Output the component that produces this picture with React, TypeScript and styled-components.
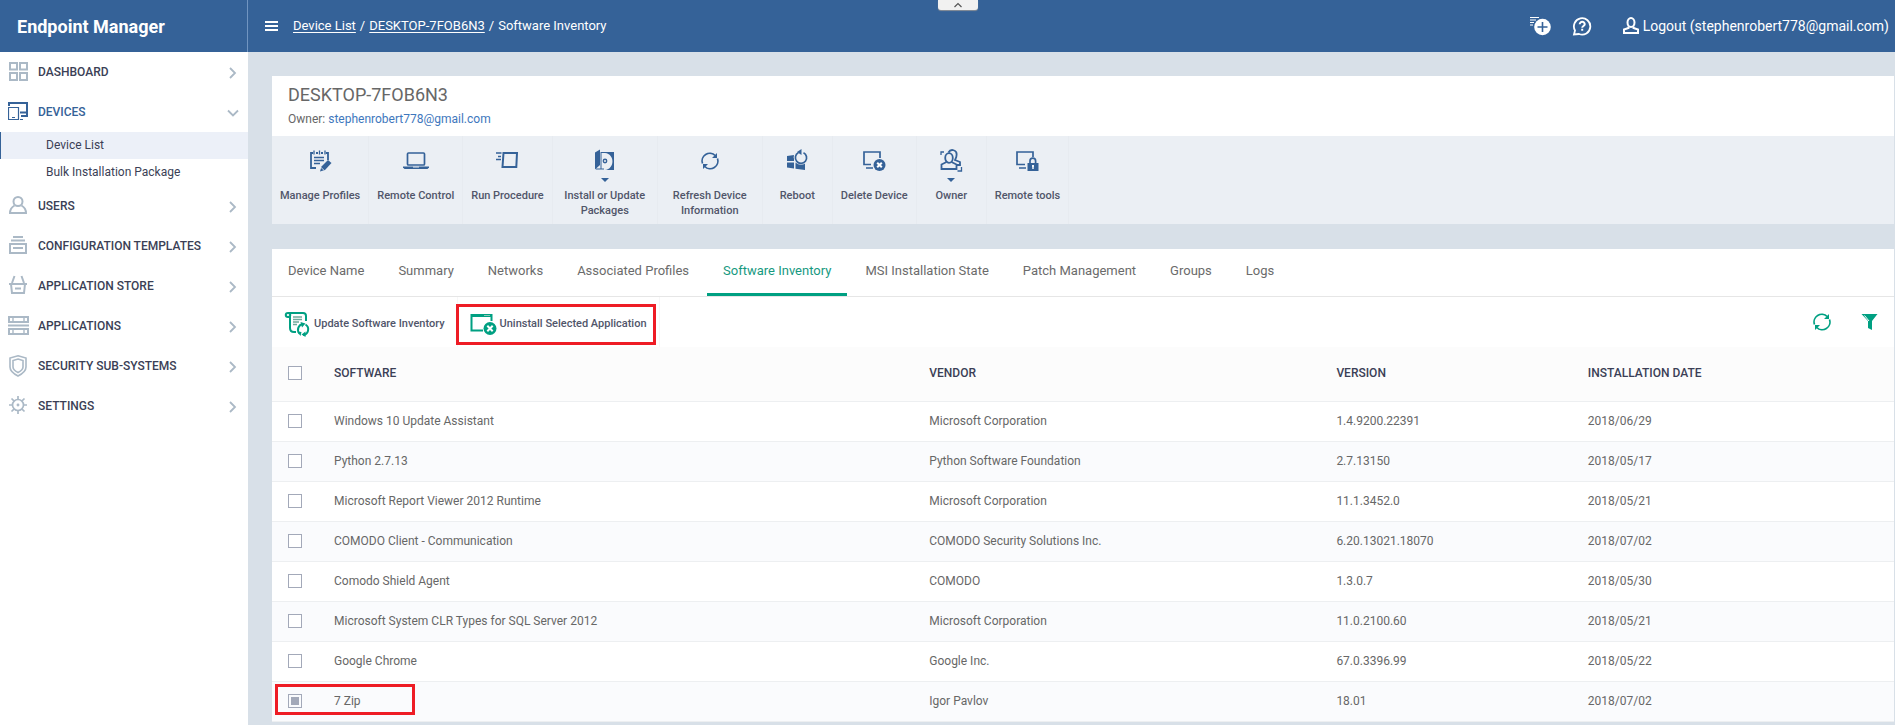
import React from 'react';
import styled, { createGlobalStyle, css } from 'styled-components';

const blue = '#356298';
const green = '#00a082';
const muted = '#abb9c6';

const GlobalStyle = createGlobalStyle`
  *, *::before, *::after { box-sizing: border-box; }
  body {
    margin: 0;
    background: #d8e0e8;
    color: #676767;
    font-family: Roboto, 'Liberation Sans', sans-serif;
    font-size: 12px;
    line-height: 16px;
  }
  button { font: inherit; color: inherit; background: none; border: 0; padding: 0; cursor: pointer; }
  h1, h2, ul, nav, p { margin: 0; padding: 0; }
  ul { list-style: none; }
  a { color: inherit; text-decoration: none; }
  svg { display: block; flex: none; }
`;

const Page = styled.div`
  display: flex;
  flex-direction: column;
  min-height: 100vh;
`;

/* Header */
const Header = styled.header`
  position: relative;
  display: flex;
  height: 52px;
  background: ${blue};
  color: #fff;
`;
const Brand = styled.div`
  display: flex;
  align-items: center;
  width: 248px;
  padding: 2px 0 0 17px;
  border-right: 1px solid #7195c1;
  font-size: 18px;
  font-weight: 700;
`;
const HeaderBar = styled.div`
  flex: 1;
  display: flex;
  align-items: center;
  padding: 0 6px 0 17px;
`;
const Crumbs = styled.nav`
  display: flex;
  gap: 4px;
  margin-left: 15px;
  flex: 1;
  font-size: 13px;
  a { text-decoration: underline; text-underline-offset: 2px; }
`;
const HeaderTools = styled.div`
  display: flex;
  align-items: center;
  gap: 20px;
`;
const Logout = styled.button`
  display: flex;
  align-items: center;
  gap: 3px;
  margin-left: 10px;
  font-size: 14px;
`;
const PullTab = styled.button`
  position: absolute;
  top: 0;
  left: 49.5%;
  display: flex;
  align-items: center;
  justify-content: center;
  width: 40px;
  height: 10px;
  border-radius: 0 0 3px 3px;
  background: #f1f1f1;
  box-shadow: 0 1px 1px #8a8f96;
`;

/* Sidebar */
const Body = styled.div`
  flex: 1;
  display: flex;
`;
const Sidebar = styled.nav`
  width: 248px;
  flex: none;
  background: #fff;
`;
const NavItem = styled.button<{ $active?: boolean }>`
  display: flex;
  align-items: center;
  width: 100%;
  height: 40px;
  padding: 0 9px 0 8px;
  gap: 8px;
  text-align: left;
  font-weight: 500;
  color: ${p => (p.$active ? blue : '#3b3f56')};
`;
const NavLabel = styled.span`
  flex: 1;
`;
const SubItem = styled.a<{ $active?: boolean }>`
  display: block;
  height: 27px;
  padding-left: 45px;
  border-left: 1px solid ${p => (p.$active ? blue : 'transparent')};
  background: ${p => (p.$active ? '#ecf0f8' : 'transparent')};
  line-height: 26px;
  color: #3b3f56;
`;

/* Content */
const Main = styled.main`
  flex: 1;
  min-width: 0;
  display: flex;
  flex-direction: column;
  gap: 25px;
  padding: 24px 1px 0 24px;
`;
const Card = styled.section`
  background: #fff;
`;
const DeviceHead = styled.div`
  height: 60px;
  padding: 8px 16px;
`;
const DeviceTitle = styled.h1`
  font-size: 18px;
  font-weight: 400;
  line-height: 22px;
`;
const Owner = styled.p`
  margin-top: 5px;
  a { color: #3e77bd; }
`;
const Actions = styled.div`
  display: flex;
  background: #ebeff4;
`;
const Action = styled.button`
  display: flex;
  flex-direction: column;
  align-items: center;
  min-width: 70px;
  max-width: 105px;
  height: 88px;
  padding: 13px 8px 0;
  border-right: 1px solid #e7ebf0;
  font-size: 11px;
  font-weight: 500;
  line-height: 15px;
  color: #51566a;
`;
const CaretSlot = styled.span`
  height: 15px;
  padding-top: 5px;
`;

const Tabs = styled.div`
  display: flex;
  gap: 2px;
  border-bottom: 1px solid #e6e6e6;
`;
const Tab = styled.button<{ $active?: boolean }>`
  height: 47px;
  padding: 0 16px;
  border-bottom: 3px solid ${p => (p.$active ? green : 'transparent')};
  font-size: 13px;
  color: ${p => (p.$active ? '#17997f' : '#6b6b6b')};
`;
const Toolbar = styled.div`
  display: flex;
  height: 50px;
  padding-right: 16px;
`;
const ToolButton = styled.button<{ $marked?: boolean }>`
  position: relative;
  display: flex;
  align-items: center;
  gap: 3px;
  padding: 4px 12px 0 12px;
  border-right: 1px solid #f7f7f7;
  font-size: 11px;
  font-weight: 500;
  color: #51566a;
  ${p => p.$marked && css`
    &::after {
      content: '';
      position: absolute;
      inset: 7px 3px 2px -2px;
      border: 3px solid #ee1c25;
    }
  `}
`;
const GridTools = styled.div`
  display: flex;
  align-items: center;
  gap: 30px;
  margin-left: auto;
`;

const Table = styled.table`
  width: 100%;
  table-layout: fixed;
  border-collapse: separate;
  border-spacing: 0;
  text-align: left;
  th, td { padding: 0 0 2px; border-bottom: 1px solid #edeff1; }
  th { height: 55px; background: #fcfcfc; font-weight: 500; color: #3b3f56; }
  td { height: 40px; }
  tbody tr:nth-child(even) td { background: #fafbfd; }
`;
const CheckCol = styled.col`width: 62px;`;
const SoftwareCol = styled.col`width: 36.7%;`;
const VendorCol = styled.col`width: 25.1%;`;
const VersionCol = styled.col`width: 15.5%;`;

const CheckCell = styled.td<{ $marked?: boolean }>`
  ${p => p.$marked && css`
    position: relative;
    &::after {
      content: '';
      position: absolute;
      top: 2px;
      left: 3px;
      width: 140px;
      height: 31px;
      border: 3px solid #ee1c25;
      pointer-events: none;
    }
  `}
`;
const CheckBox = styled.input`
  appearance: none;
  display: block;
  width: 14px;
  height: 14px;
  margin: 0 0 0 16px;
  padding: 2px;
  border: 1px solid #a3a9b9;
  background: #fff;
  &:checked { background: #a3a9b9 content-box; }
`;

type IconProps = { w?: number; h?: number; color?: string; sw?: number; children: React.ReactNode };
const Icon = ({ w = 22, h = 22, color = 'currentColor', sw = 2, children }: IconProps) => (
  <svg width={w} height={h} viewBox={`0 0 ${w} ${h}`} fill="none" stroke={color} strokeWidth={sw} aria-hidden="true">
    {children}
  </svg>
);

const Chevron = ({ down }: { down?: boolean }) => (
  <Icon w={12} h={14} color={muted} sw={1.8}>
    <path d={down ? 'M1 5.500l5 5 5-5' : 'M3 3l5 5-5 5'} />
  </Icon>
);

const navIcons = {
  dashboard: (
    <Icon color={muted}>
      <path d="M2 2h7v6.5H2zM12 2h7v6.5h-7zM2 12h7v7H2zM12 12h7v7h-7z" />
    </Icon>
  ),
  devices: (
    <Icon color={blue}>
      <path d="M1 5V2h18v13h-6M12 11.500h7" />
      <path d="M.5 6.500h10v12H.5z" strokeWidth="1.200" />
      <path d="M4 16.500h3M12 18.500h3" strokeWidth="1.200" />
    </Icon>
  ),
  users: (
    <Icon color={muted}>
      <circle cx="10" cy="6.500" r="4.500" />
      <path d="M6.500 10.500C4 12 2 14 2 18h16c0-4-2-6-4.500-7.500" />
    </Icon>
  ),
  templates: (
    <Icon color={muted}>
      <path d="M5 2h10M3 5.500h14M2 9h16v9H2zM5 13h10" />
    </Icon>
  ),
  store: (
    <Icon color={muted}>
      <path d="M6.500 1L4 8M13.500 1L16 8M1 9h18M3 9l1 9h12l1-9M7 13.500h6" />
    </Icon>
  ),
  applications: (
    <Icon color={muted}>
      <path d="M1 2h19v5H1zM1 14h19v5H1zM0 10.500h21" />
      <path d="M5 2v5M16 2v5M5 14v5M16 14v5" strokeWidth="1.400" />
    </Icon>
  ),
  security: (
    <Icon color={muted} sw={1.6}>
      <path d="M10 .8L18 3v9c0 4-3 6.500-8 9-5-2.500-8-5-8-9V3z" />
      <path d="M10 4l5 1.500V12c0 2.500-2 4-5 5.500C7 16 5 14.500 5 12V5.500z" />
    </Icon>
  ),
  settings: (
    <Icon color={muted} sw={1.7}>
      <circle cx="10" cy="10" r="5.500" />
      <path d="M10 1v3.500M10 15.500V19M1 10h3.500M15.500 10H19M3.500 3.500l2.700 2.700M13.800 13.800l2.700 2.700M3.500 16.500l2.700-2.700M13.800 6.200l2.700-2.700" />
      <circle cx="10" cy="10" r=".6" />
    </Icon>
  ),
};

const RefreshShape = () => (
  <>
    <path d="M1.500 11.500A7.700 7.700 0 0 1 14.200 3.500M16.500 6.500A7.700 7.700 0 0 1 3.800 14.500" />
    <path d="M16 1v5h-5zM2 17v-5h5z" fill="currentColor" stroke="none" />
  </>
);

const actionIcons = {
  profiles: (
    <Icon w={24} h={24} color={blue} sw={1.8}>
      <path d="M8 19H3V4h2M18 4h2v7M8 4h2M13 4h2" />
      <path d="M6 1.500v4M11.500 1.500v4M17 1.500v4M6 8.500h10M6 11.500h10M6 14.500h6" strokeWidth="1.300" />
      <path d="M12 22.500l1.500-5 6.500-6.500 3.500 3-6.500 7z" fill={blue} stroke="none" />
      <path d="M13 18.500l3 2.700" stroke="#ebeff4" strokeWidth=".8" />
    </Icon>
  ),
  remote: (
    <Icon w={26} h={24} color={blue} sw={1.7}>
      <rect x="4.500" y="4" width="17" height="12" rx="1" />
      <path d="M0 17.500h26v1L24.500 20h-23L0 18.500z" fill={blue} stroke="none" />
      <path d="M10 18h6" stroke="#ebeff4" strokeWidth="1" />
    </Icon>
  ),
  run: (
    <Icon w={24} h={24} color={blue}>
      <path d="M8.500 4H22l-.7 14H7.500z" />
      <path d="M1 4h5.500M3 7.500h3M1 10.500h5" strokeWidth="1.700" />
    </Icon>
  ),
  install: (
    <Icon w={24} h={24} color={blue} sw={1.4}>
      <path d="M2 3.500L7 .5V16l-5 4.500z" fill={blue} stroke="none" />
      <path d="M8 3h13v18h-9c10-1 10-16 0-17H8z" fill={blue} stroke="none" />
      <circle cx="12" cy="12" r="1.700" />
      <path d="M8 3v17M3 20h8" strokeWidth="1" />
    </Icon>
  ),
  refresh: (
    <Icon w={22} h={24} color={blue} sw={1.700}>
      <g transform="translate(2 3)" color={blue}><RefreshShape /></g>
    </Icon>
  ),
  reboot: (
    <Icon w={24} h={24} color={blue} sw={1.700}>
      <path d="M2 7l7-1v6H2zM2 13.500h7v6l-7-1zM10.500 13.500H20V21l-9.500-1.300z" fill={blue} stroke="none" />
      <circle cx="16" cy="8.500" r="7.300" fill="#ebeff4" stroke="none" />
      <path d="M18.500 3.700a5.600 5.600 0 1 1-5.200.1" />
      <path d="M16.500 0v6L12 3z" fill={blue} stroke="none" />
    </Icon>
  ),
  remove: (
    <Icon w={24} h={24} color={blue} sw={1.700}>
      <path d="M9 15.500H2V3h16v6M4 19h7" />
      <circle cx="17.500" cy="16" r="6" fill={blue} stroke="none" />
      <path d="M15.200 13.700l4.600 4.600M19.800 13.700l-4.600 4.600" stroke="#fff" strokeWidth="2" />
    </Icon>
  ),
  owner: (
    <Icon w={24} h={24} color={blue} sw={1.800}>
      <path d="M9.500 3.500c2-4 9-3 8 3 0 2-1 3-1.500 4.500l5 2v3h-4" />
      <ellipse cx="10" cy="9" rx="3.800" ry="4.800" fill="#ebeff4" />
      <path d="M7.500 13L2.500 15.500V20h15v-4.500L12.500 13" />
      <path d="M2 6V3h3M22.500 18v4h-4" strokeWidth="1.300" />
    </Icon>
  ),
  tools: (
    <Icon w={24} h={24} color={blue} sw={1.700}>
      <path d="M10 15.500H2V3h16v5M4 19h7" />
      <path d="M15 14v-2a2.800 2.800 0 0 1 5.600 0v2" />
      <path d="M12.500 14h11v8h-11z" fill={blue} stroke="none" />
      <path d="M18 16v4M17 17h2" stroke="#fff" strokeWidth="1.400" />
    </Icon>
  ),
};

const navigation: { icon: keyof typeof navIcons; label: string; children?: string[] }[] = [
  { icon: 'dashboard', label: 'DASHBOARD' },
  { icon: 'devices', label: 'DEVICES', children: ['Device List', 'Bulk Installation Package'] },
  { icon: 'users', label: 'USERS' },
  { icon: 'templates', label: 'CONFIGURATION TEMPLATES' },
  { icon: 'store', label: 'APPLICATION STORE' },
  { icon: 'applications', label: 'APPLICATIONS' },
  { icon: 'security', label: 'SECURITY SUB-SYSTEMS' },
  { icon: 'settings', label: 'SETTINGS' },
];

const actions: { icon: keyof typeof actionIcons; label: string; menu?: boolean }[] = [
  { icon: 'profiles', label: 'Manage Profiles' },
  { icon: 'remote', label: 'Remote Control' },
  { icon: 'run', label: 'Run Procedure' },
  { icon: 'install', label: 'Install or Update Packages', menu: true },
  { icon: 'refresh', label: 'Refresh Device Information' },
  { icon: 'reboot', label: 'Reboot' },
  { icon: 'remove', label: 'Delete Device' },
  { icon: 'owner', label: 'Owner', menu: true },
  { icon: 'tools', label: 'Remote tools' },
];

const tabs = [
  'Device Name', 'Summary', 'Networks', 'Associated Profiles', 'Software Inventory',
  'MSI Installation State', 'Patch Management', 'Groups', 'Logs',
];

const software = [
  ['Windows 10 Update Assistant', 'Microsoft Corporation', '1.4.9200.22391', '2018/06/29'],
  ['Python 2.7.13', 'Python Software Foundation', '2.7.13150', '2018/05/17'],
  ['Microsoft Report Viewer 2012 Runtime', 'Microsoft Corporation', '11.1.3452.0', '2018/05/21'],
  ['COMODO Client - Communication', 'COMODO Security Solutions Inc.', '6.20.13021.18070', '2018/07/02'],
  ['Comodo Shield Agent', 'COMODO', '1.3.0.7', '2018/05/30'],
  ['Microsoft System CLR Types for SQL Server 2012', 'Microsoft Corporation', '11.0.2100.60', '2018/05/21'],
  ['Google Chrome', 'Google Inc.', '67.0.3396.99', '2018/05/22'],
  ['7 Zip', 'Igor Pavlov', '18.01', '2018/07/02'],
];

export default function App() {
  const [selected, setSelected] = React.useState<string[]>(['7 Zip']);
  const toggle = (name: string) =>
    setSelected(s => (s.includes(name) ? s.filter(n => n !== name) : [...s, name]));

  return (
    <Page>
      <GlobalStyle />
      <Header>
        <Brand>Endpoint Manager</Brand>
        <HeaderBar>
          <button aria-label="Toggle menu">
            <Icon w={13} h={12}><path d="M0 2h13M0 6h13M0 10h13" /></Icon>
          </button>
          <Crumbs aria-label="Breadcrumb">
            <a href="#devices">Device List</a>
            <span>/</span>
            <a href="#device">DESKTOP-7FOB6N3</a>
            <span>/</span>
            <span>Software Inventory</span>
          </Crumbs>
          <HeaderTools>
            <button aria-label="Add">
              <Icon w={22} h={20} sw={1.200}>
                <path d="M0 1.500h9M0 4h6M0 6.500h4M0 9h3" />
                <circle cx="12.500" cy="11" r="8.300" fill="#fff" stroke="none" />
                <path d="M12.500 6v10M7.500 11h10" stroke={blue} strokeWidth="1.600" />
              </Icon>
            </button>
            <button aria-label="Help">
              <Icon w={20} h={20} sw={1.800}>
                <path d="M2 18.500l1-4a8.200 8.200 0 1 1 4 3.500z" />
                <path d="M7.700 8.300c0-3.400 5.200-3.100 5 0-.2 1.700-2.400 1.700-2.500 3.400M10.200 12.800v2" strokeWidth="2" />
              </Icon>
            </button>
            <Logout>
              <Icon w={18} h={20}>
                <ellipse cx="9" cy="6.500" rx="3.500" ry="4.500" />
                <path d="M6.500 10.500V12L2 13.500V17h14v-3.500L11.500 12v-1.500" />
              </Icon>
              Logout (stephenrobert778@gmail.com)
            </Logout>
          </HeaderTools>
        </HeaderBar>
        <PullTab aria-label="Collapse header">
          <Icon w={8} h={6} color="#555" sw={1.200}><path d="M.5 5L4 1.500 7.500 5" /></Icon>
        </PullTab>
      </Header>

      <Body>
        <Sidebar aria-label="Main">
          {navigation.map(item => (
            <React.Fragment key={item.label}>
              <NavItem $active={!!item.children}>
                {navIcons[item.icon]}
                <NavLabel>{item.label}</NavLabel>
                <Chevron down={!!item.children} />
              </NavItem>
              {item.children?.map((child, i) => (
                <SubItem key={child} href="#devices" $active={i === 0}>{child}</SubItem>
              ))}
            </React.Fragment>
          ))}
        </Sidebar>

        <Main>
          <Card>
            <DeviceHead>
              <DeviceTitle>DESKTOP-7FOB6N3</DeviceTitle>
              <Owner>Owner: <a href="#owner">stephenrobert778@gmail.com</a></Owner>
            </DeviceHead>
            <Actions>
              {actions.map(action => (
                <Action key={action.label}>
                  {actionIcons[action.icon]}
                  <CaretSlot>
                    {action.menu && (
                      <Icon w={8} h={5}><path d="M0 0h8L4 4z" fill={blue} stroke="none" /></Icon>
                    )}
                  </CaretSlot>
                  {action.label}
                </Action>
              ))}
            </Actions>
          </Card>

          <Card>
            <Tabs role="tablist">
              {tabs.map(tab => (
                <Tab key={tab} role="tab" aria-selected={tab === 'Software Inventory'} $active={tab === 'Software Inventory'}>
                  {tab}
                </Tab>
              ))}
            </Tabs>
            <Toolbar>
              <ToolButton>
                <Icon w={27} h={26} color={green}>
                  <path d="M4 6C1 6 1 2 4 2h15c2 0 3 1 3 3v5M4 6c3 0 3-4 0-4M4 6h2v11c0 3 1 4 4 4h2" />
                  <path d="M9 6h9M9 8.500h9M9 11h6M9 13.500h4" stroke="#6fa99b" strokeWidth="1.500" />
                  <path d="M15.500 22.500A5.700 5.700 0 0 1 19 13M21.500 13.500A5.700 5.700 0 0 1 19 24" />
                  <path d="M16.500 11l5 1.500-3.500 4zM21.500 26l-4-2.500 4-3zM13 20.500l4.500.5-1 4z" fill={green} stroke="none" />
                </Icon>
                Update Software Inventory
              </ToolButton>
              <ToolButton $marked>
                <Icon w={27} h={24} color={green}>
                  <path d="M13 18.500H1.500V3h20v6" />
                  <path d="M1 3.500h21" strokeWidth="3" />
                  <path d="M14 3.500h6" stroke="#8cc7b8" strokeWidth="1" />
                  <circle cx="20" cy="16.500" r="6.500" fill={green} stroke="none" />
                  <path d="M17.300 13.800l5.400 5.400M22.700 13.800l-5.400 5.400" stroke="#fff" />
                </Icon>
                Uninstall Selected Application
              </ToolButton>
              <GridTools>
                <button aria-label="Refresh">
                  <Icon w={18} h={18} color={green} sw={1.700}><g color={green}><RefreshShape /></g></Icon>
                </button>
                <button aria-label="Filter">
                  <Icon w={17} h={18} color={green}>
                    <path d="M.5 1h16L11 8v9l-4-2V8z" fill={green} stroke="none" />
                    <path d="M3.500 2.500L8 8" stroke="#fff" strokeWidth="1" />
                  </Icon>
                </button>
              </GridTools>
            </Toolbar>
            <Table>
              <colgroup><CheckCol /><SoftwareCol /><VendorCol /><VersionCol /><col /></colgroup>
              <thead>
                <tr>
                  <th><CheckBox type="checkbox" aria-label="Select all" /></th>
                  <th>SOFTWARE</th>
                  <th>VENDOR</th>
                  <th>VERSION</th>
                  <th>INSTALLATION DATE</th>
                </tr>
              </thead>
              <tbody>
                {software.map(row => (
                  <tr key={row[0]}>
                    <CheckCell $marked={row[0] === '7 Zip'}>
                      <CheckBox
                        type="checkbox"
                        aria-label={`Select ${row[0]}`}
                        checked={selected.includes(row[0])}
                        onChange={() => toggle(row[0])}
                      />
                    </CheckCell>
                    {row.map((cell, i) => <td key={i}>{cell}</td>)}
                  </tr>
                ))}
              </tbody>
            </Table>
          </Card>
        </Main>
      </Body>
    </Page>
  );
}
